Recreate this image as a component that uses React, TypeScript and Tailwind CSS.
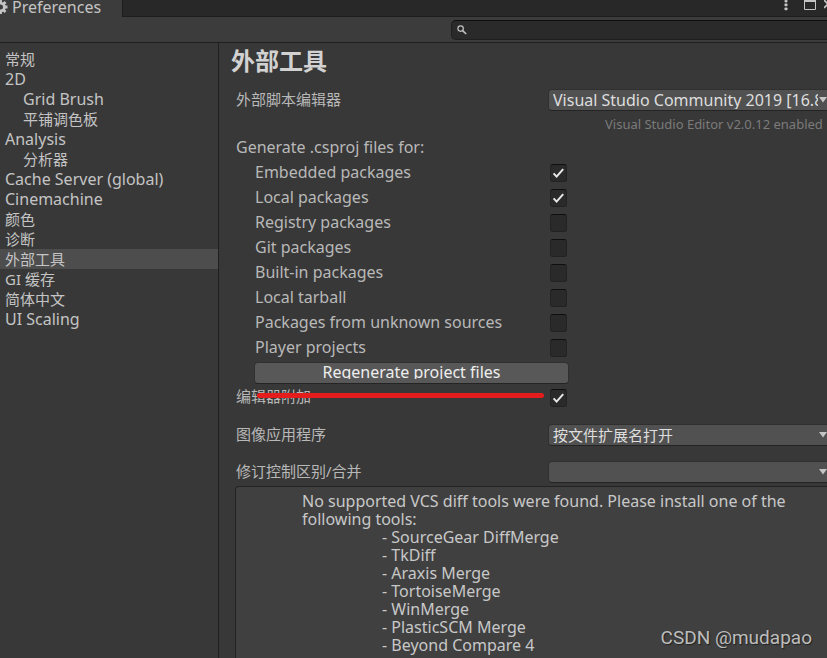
import { useState } from 'react';
import type { ReactNode } from 'react';
import clsx from 'clsx';

interface NavItem {
  label: string;
  nested?: boolean;
}

interface PackageOption {
  id: string;
  label: string;
  checked: boolean;
}

const navItems: NavItem[] = [
  { label: '常规' },
  { label: '2D' },
  { label: 'Grid Brush', nested: true },
  { label: '平铺调色板', nested: true },
  { label: 'Analysis' },
  { label: '分析器', nested: true },
  { label: 'Cache Server (global)' },
  { label: 'Cinemachine' },
  { label: '颜色' },
  { label: '诊断' },
  { label: '外部工具' },
  { label: 'GI 缓存' },
  { label: '简体中文' },
  { label: 'UI Scaling' },
];

const packageOptions: PackageOption[] = [
  { id: 'embedded', label: 'Embedded packages', checked: true },
  { id: 'local', label: 'Local packages', checked: true },
  { id: 'registry', label: 'Registry packages', checked: false },
  { id: 'git', label: 'Git packages', checked: false },
  { id: 'builtin', label: 'Built-in packages', checked: false },
  { id: 'tarball', label: 'Local tarball', checked: false },
  { id: 'unknown', label: 'Packages from unknown sources', checked: false },
  { id: 'player', label: 'Player projects', checked: false },
];

const diffTools = [
  'SourceGear DiffMerge',
  'TkDiff',
  'Araxis Merge',
  'TortoiseMerge',
  'WinMerge',
  'PlasticSCM Merge',
  'Beyond Compare 4',
];

// Chinese labels are set one pixel smaller than the latin ones
const textSize = (label: string) => (/[\u4e00-\u9fff]/.test(label) ? 'text-[15px]' : 'text-[16px]');

/* ─── Icons ─── */
const GearIcon = () => (
  <svg width="15" height="15" viewBox="0 0 15 15" className="-ml-[7px] shrink-0" fill="none" stroke="#c4c4c4">
    <circle cx="7.5" cy="7" r="3.9" strokeWidth="2.8" />
    <path
      d="M7.5 0v3M7.5 11v3M0.5 7h3M11.5 7h3M2.5 2l2 2M10.5 10l2 2M12.5 2l-2 2M4.5 10l-2 2"
      strokeWidth="2.8"
    />
  </svg>
);

const KebabIcon = () => (
  <svg width="4" height="12" viewBox="0 0 4 12" fill="#c4c4c4">
    <rect x="0.5" y="0" width="3" height="2.4" rx="0.8" />
    <rect x="0.5" y="3.4" width="3" height="2.8" rx="0.8" />
    <rect x="0.5" y="7.4" width="3" height="2.8" rx="0.8" />
  </svg>
);

const MaximizeIcon = () => (
  <svg width="12" height="12" viewBox="0 0 12 12" fill="none">
    <path d="M.5 0v9.5h11V0" stroke="#c4c4c4" />
    <path d="M0 1h12" stroke="#c4c4c4" strokeWidth="2" />
  </svg>
);

const CloseIcon = () => (
  <svg width="10" height="12" viewBox="0 0 10 12" fill="none" stroke="#c4c4c4" strokeWidth="1.6">
    <path d="M0 0l9 9M0 8l9-9" />
  </svg>
);

const SearchIcon = () => (
  <svg width="10" height="10" viewBox="0 0 10 10" fill="none" stroke="#c4c4c4">
    <circle cx="3.6" cy="3.6" r="2.7" strokeWidth="1.2" />
    <path d="M5.6 5.6l3.6 3.4" strokeWidth="1.6" />
  </svg>
);

/* ─── Controls ─── */
interface CheckboxProps {
  id: string;
  checked: boolean;
  onChange: (checked: boolean) => void;
}

const Checkbox = ({ id, checked, onChange }: CheckboxProps) => (
  <span className="relative mt-px ml-px block h-[18px] w-[17px] shrink-0">
    <input
      id={id}
      type="checkbox"
      checked={checked}
      onChange={(e) => onChange(e.target.checked)}
      className="block h-full w-full appearance-none rounded-[3px] border border-[#222] border-t-[#0f0f0f] bg-[#2a2a2a]"
    />
    {checked && (
      <svg
        viewBox="0 0 17 18"
        className="pointer-events-none absolute inset-0 h-full w-full"
        fill="none"
        stroke="#e8e8e8"
        strokeWidth="2"
      >
        <path d="M3.6 9.4l3 3.2 6.6-7.4" />
      </svg>
    )}
  </span>
);

interface DropdownProps {
  id: string;
  options: string[];
}

const Dropdown = ({ id, options }: DropdownProps) => (
  <div className="relative -ml-px min-w-0 flex-1">
    <select
      id={id}
      className={clsx(
        'block h-[22px] w-full appearance-none rounded-l-[4px] border border-r-0 border-[#303030] border-b-[#242424] bg-[#515151] pr-[9px] pb-px pl-1 leading-5 text-[#dedede]',
        textSize(options[0])
      )}
    >
      {options.map((option) => (
        <option key={option}>{option}</option>
      ))}
    </select>
    <svg
      width="8"
      height="6"
      viewBox="0 0 8 6"
      className="pointer-events-none absolute top-2 right-0"
      fill="#c4c4c4"
    >
      <path d="M0 0h8L4 5.5z" />
    </svg>
  </div>
);

interface FieldProps {
  id: string;
  label: string;
  children: ReactNode;
}

const Field = ({ id, label, children }: FieldProps) => (
  <div className="flex items-center pl-[17px]">
    <label htmlFor={id} className="w-[313px] shrink-0 pb-[2px] text-[15px] leading-5">
      {label}
    </label>
    {children}
  </div>
);

const App = () => {
  const [active, setActive] = useState('外部工具');
  const [packages, setPackages] = useState(packageOptions);
  const [attaching, setAttaching] = useState(true);

  const togglePackage = (id: string, checked: boolean) => {
    setPackages((prev) => prev.map((p) => (p.id === id ? { ...p, checked } : p)));
  };

  return (
    <div className="relative flex h-screen flex-col overflow-hidden bg-[#383838] font-['Noto_Sans','Noto_Sans_CJK_SC',sans-serif] text-[#c4c4c4]">
      {/* ── Title bar ── */}
      <header className="flex h-[17px] shrink-0 bg-[#282828]">
        <div className="flex w-[122px] items-start gap-1 bg-[#3c3c3c]">
          <GearIcon />
          <span className="text-[16px] leading-[14px]">Preferences</span>
        </div>
        <div className="flex flex-1 items-start justify-end gap-4 overflow-hidden border-b border-l border-[#1d1d1d]">
          <button type="button" aria-label="Menu">
            <KebabIcon />
          </button>
          <button type="button" aria-label="Maximize">
            <MaximizeIcon />
          </button>
          <button type="button" aria-label="Close" className="-mr-[7px] -ml-2">
            <CloseIcon />
          </button>
        </div>
      </header>

      {/* ── Search ── */}
      <div className="flex h-[26px] shrink-0 justify-end border-b border-[#1f1f1f] bg-[#3c3c3c] pt-[3px]">
        <label className="flex h-5 w-[376px] items-center rounded-l-[5px] border border-r-0 border-[#1f1f1f] border-t-[#0f0f0f] bg-[#2a2a2a] pl-[5px]">
          <SearchIcon />
          <input type="text" aria-label="Search" className="ml-1 min-w-0 flex-1 bg-transparent text-sm outline-none" />
        </label>
      </div>

      <div className="flex min-h-0 flex-1">
        {/* ── Sidebar ── */}
        <nav className="w-[219px] shrink-0 border-r border-[#1f1f1f] pt-[6px]">
          <ul>
            {navItems.map((item) => (
              <li key={item.label}>
                <button
                  type="button"
                  onClick={() => setActive(item.label)}
                  className={clsx(
                    'block h-5 w-full text-left leading-5 whitespace-nowrap',
                    textSize(item.label),
                    item.nested ? 'pl-[23px]' : 'pl-[5px]',
                    active === item.label && 'bg-[#4d4d4d]'
                  )}
                >
                  {item.label}
                </button>
              </li>
            ))}
          </ul>
        </nav>

        {/* ── Settings ── */}
        <main className="flex min-w-0 flex-1 flex-col text-[#b8b8b8]">
          <h1 className="mb-[10px] pl-3 text-[24px] leading-9 font-bold text-[#d2d2d2]">外部工具</h1>

          <Field id="script-editor" label="外部脚本编辑器">
            <Dropdown id="script-editor" options={['Visual Studio Community 2019 [16.8.3]']} />
          </Field>
          <p className="overflow-hidden pl-[386px] text-[13px] leading-[26px] whitespace-nowrap text-[#7b7b7b]">
            Visual Studio Editor v2.0.12 enabled
          </p>

          <fieldset>
            <legend className="mb-[3px] pl-[17px] text-[16px] leading-5">Generate .csproj files for:</legend>
            {packages.map((option) => (
              <div key={option.id} className="flex h-[25px] items-center pl-9">
                <label htmlFor={option.id} className="w-[294px] shrink-0 pb-[2px] text-[16px] leading-[22px]">
                  {option.label}
                </label>
                <Checkbox
                  id={option.id}
                  checked={option.checked}
                  onChange={(checked) => togglePackage(option.id, checked)}
                />
              </div>
            ))}
          </fieldset>

          <button
            type="button"
            className="mt-[2px] ml-[35px] h-[22px] w-[315px] shrink-0 rounded-[4px] border border-[#303030] border-b-[#242424] bg-[#585858] text-[16px] text-[#eee]"
          >
            <span className="-mt-1 block h-[15px] overflow-hidden leading-4">Regenerate project files</span>
          </button>

          {/* Crossed out with a red marker line */}
          <div className="relative mb-[14px] flex h-[26px] shrink-0 items-center pl-[17px]">
            <label htmlFor="attaching" className="w-[313px] pb-[2px] text-[15px] leading-5">
              编辑器附加
            </label>
            <Checkbox id="attaching" checked={attaching} onChange={setAttaching} />
            <span className="absolute top-[9px] left-[38px] h-[5px] w-[287px] rounded-full bg-[#e51c1c]" />
          </div>

          <div className="flex flex-col gap-[15px]">
            <Field id="image-app" label="图像应用程序">
              <Dropdown id="image-app" options={['按文件扩展名打开']} />
            </Field>
            <Field id="diff-merge" label="修订控制区别/合并">
              <Dropdown id="diff-merge" options={['']} />
            </Field>
          </div>

          <section className="mt-[3px] ml-4 min-h-0 flex-1 rounded-tl-[4px] border-t border-l border-[#232323] bg-[#404040] pt-[5px] pl-[66px] text-[16px] leading-[18px] text-[#c8c8c8]">
            <p className="max-w-[500px]">
              No supported VCS diff tools were found. Please install one of the following tools:
            </p>
            <ul className="pl-20">
              {diffTools.map((tool) => (
                <li key={tool}>{`- ${tool}`}</li>
              ))}
            </ul>
          </section>
        </main>
      </div>

      {/* ── Watermark ── */}
      <div className="pointer-events-none absolute right-[15px] bottom-2 font-['Roboto','Liberation_Sans',sans-serif] text-[19px] leading-6 text-[#bdbdbd] [text-shadow:1px_1px_1px_#222]">
        CSDN @mudapao
      </div>
    </div>
  );
};

export default App;
